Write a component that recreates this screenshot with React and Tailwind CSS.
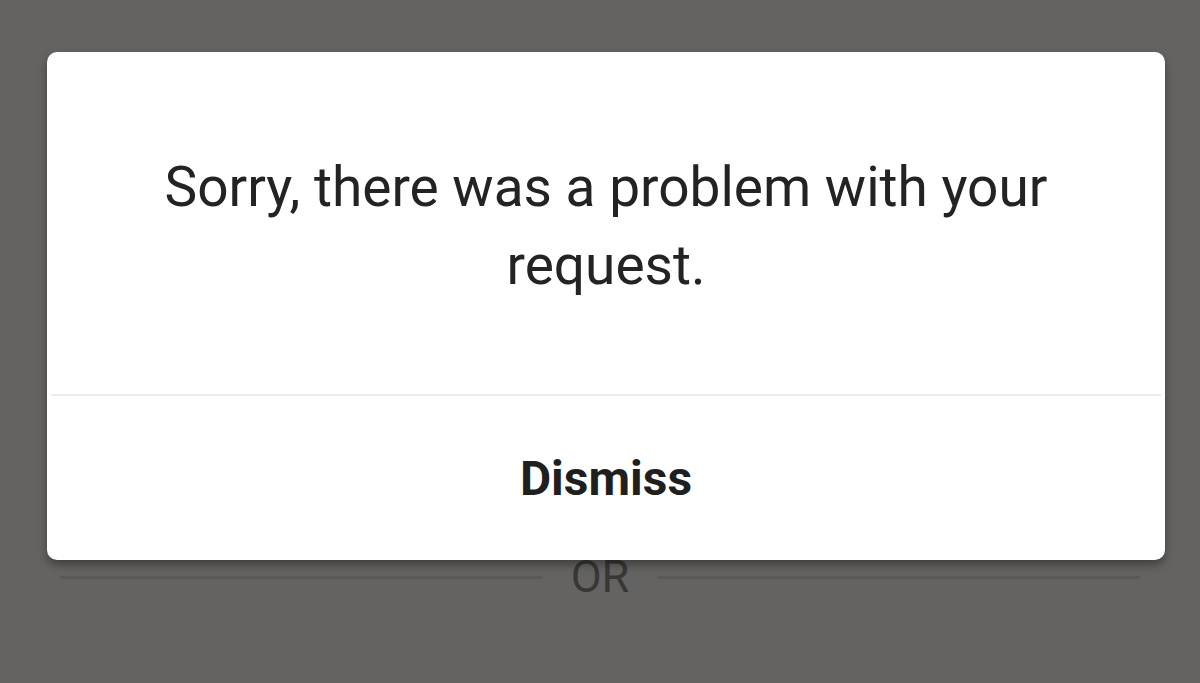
export default function App() {
  return (
    <div
      className="relative w-[1200px] h-[683px] overflow-hidden bg-[#646362]"
      style={{ fontFamily: "Roboto, 'Noto Sans', sans-serif" }}
    >
      {/* content behind the modal */}
      <div className="pt-[552px] flex items-center">
        <div className="flex-1 h-[3px] bg-[#5a5958] ml-[60px]" />
        <div className="px-[28px] text-[45px] leading-[50px] text-[#383736]">OR</div>
        <div className="flex-1 h-[3px] bg-[#5a5958] mr-[60px]" />
      </div>

      {/* modal */}
      <div className="absolute left-[47px] top-[52px] w-[1118px] h-[508px] bg-white rounded-[10px] shadow-[0_5px_8px_rgba(0,0,0,0.35)] flex flex-col">
        <div className="h-[342px] flex items-center justify-center px-[60px] pt-[6px]">
          <p className="text-center text-[55px] leading-[78px] text-[#232323]">
            Sorry, there was a problem with your request.
          </p>
        </div>
        <div className="h-[2px] bg-[#ececec] mx-[4px]" />
        <div className="flex-1 flex items-center justify-center pt-[2px]">
          <span className="text-[48px] font-bold text-[#1f1f1f]">Dismiss</span>
        </div>
      </div>
    </div>
  );
}
